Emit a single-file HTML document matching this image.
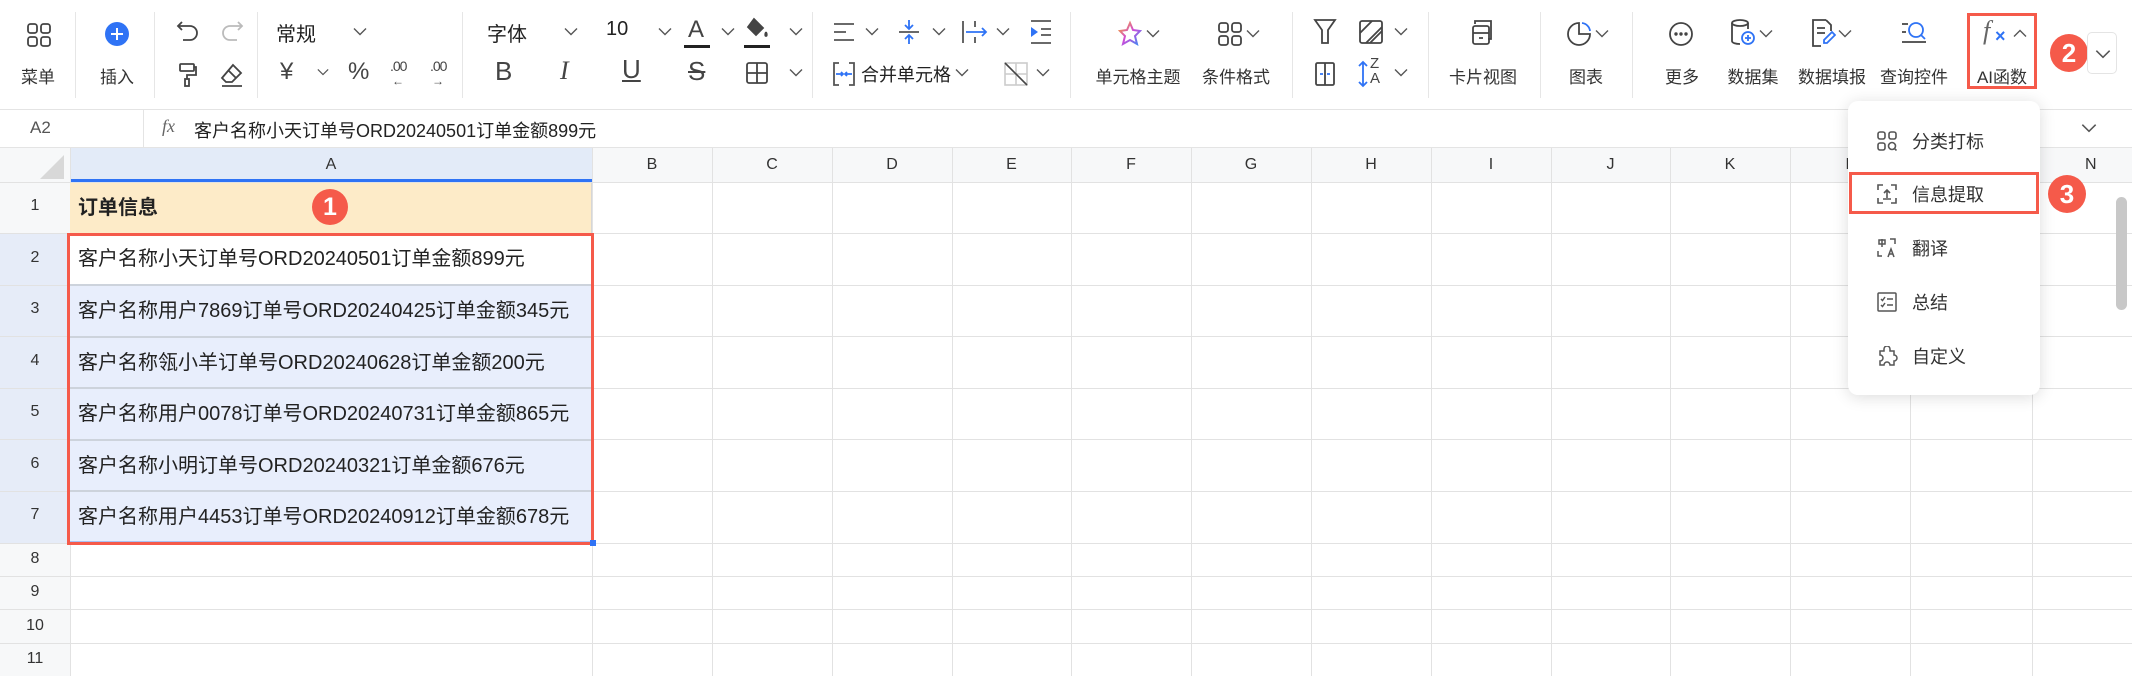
<!DOCTYPE html>
<html><head><meta charset="utf-8"><style>
*{margin:0;padding:0;box-sizing:border-box}
body{width:2132px;height:676px;overflow:hidden;background:#fff;position:relative;font-family:"Liberation Sans","Noto Sans CJK SC",sans-serif;color:#333}
.a{position:absolute}
.lbl{position:absolute;font-size:17px;color:#333;transform:translateX(-50%);white-space:nowrap;top:63px}
.ic{position:absolute}
.sep{position:absolute;top:12px;width:1px;height:86px;background:#e6e6e6}
.t{position:absolute;font-size:20px;color:#222;white-space:nowrap}
.vl{position:absolute;width:1px;background:#e2e2e2}
.hl{position:absolute;height:1px;background:#e2e2e2}
.col{position:absolute;top:147px;height:35px;line-height:35px;text-align:center;font-size:16px;color:#333}
.rn{position:absolute;left:0;width:70px;text-align:center;font-size:16px;color:#333}
.cell{position:absolute;left:70px;width:522px;font-size:20px;color:#222;padding-left:8px;border-bottom:2px solid #cdd3dc}
.badge{position:absolute;border-radius:50%;background:#f55a4a;color:#fff;font-weight:bold;text-align:center;font-family:"Liberation Sans",sans-serif}
.mi{position:absolute;left:1912px;font-size:18px;color:#333}
</style></head><body>
<svg width="0" height="0" style="position:absolute"><defs>
<symbol id="cv" viewBox="0 0 14 9"><path d="M1 1.5L7 7.5L13 1.5" fill="none" stroke="#555" stroke-width="1.4"/></symbol>
</defs></svg>

<!-- toolbar -->
<svg class="ic" style="left:26px;top:22px" width="26" height="26" viewBox="0 0 26 26" fill="none" stroke="#444" stroke-width="1.8"><rect x="2" y="2" width="9" height="9" rx="2.5"/><rect x="15" y="2" width="9" height="9" rx="2.5"/><rect x="2" y="15" width="9" height="9" rx="2.5"/><rect x="15" y="15" width="9" height="9" rx="2.5"/></svg>
<div class="lbl" style="left:38px">菜单</div>
<div class="sep" style="left:75px"></div>
<svg class="ic" style="left:104px;top:21px" width="26" height="26"><circle cx="13" cy="13" r="12" fill="#2f73f5"/><path d="M13 7v12M7 13h12" stroke="#fff" stroke-width="2"/></svg>
<div class="lbl" style="left:117px">插入</div>
<div class="sep" style="left:154px"></div>
<svg class="ic" style="left:176px;top:20px" width="24" height="22" fill="none" stroke="#444" stroke-width="1.8"><path d="M6 2L2 6L6 10"/><path d="M2 6h12a7 7 0 0 1 0 14H7"/></svg>
<svg class="ic" style="left:220px;top:20px" width="24" height="22" fill="none" stroke="#bbb" stroke-width="1.8"><path d="M18 2L22 6L18 10"/><path d="M22 6H10a7 7 0 0 0 0 14h7"/></svg>
<svg class="ic" style="left:178px;top:62px" width="20" height="26" fill="none" stroke="#444" stroke-width="1.8"><rect x="2" y="2" width="14" height="7" rx="1"/><path d="M16 5h2v8H9v4"/><rect x="7" y="17" width="4" height="7"/></svg>
<svg class="ic" style="left:219px;top:62px" width="26" height="26" fill="none" stroke="#444" stroke-width="1.8"><path d="M14 3l8 8-9 9H7l-4-4z"/><path d="M9 8l8 8"/><path d="M3 24h20"/></svg>
<div class="sep" style="left:257px"></div>
<div class="t" style="left:276px;top:18px;font-size:20px">常规</div>
<svg class="ic" style="left:353px;top:27px" width="14" height="9"><use href="#cv"/></svg>
<div class="t" style="left:280px;top:58px;font-size:24px;color:#444">¥</div>
<svg class="ic" style="left:317px;top:68px" width="12" height="8"><use href="#cv"/></svg>
<div class="t" style="left:348px;top:58px;font-size:24px;color:#444">%</div>
<div class="t" style="left:390px;top:58px;font-size:14px;color:#444;letter-spacing:-1px">.00<br></div><div class="t" style="left:392px;top:74px;font-size:12px;color:#444">←</div>
<div class="t" style="left:430px;top:58px;font-size:14px;color:#444;letter-spacing:-1px">.00</div><div class="t" style="left:432px;top:74px;font-size:12px;color:#444">→</div>
<div class="sep" style="left:462px"></div>
<div class="t" style="left:487px;top:18px">字体</div>
<svg class="ic" style="left:564px;top:27px" width="14" height="9"><use href="#cv"/></svg>
<div class="t" style="left:606px;top:18px">10</div>
<svg class="ic" style="left:658px;top:27px" width="14" height="9"><use href="#cv"/></svg>
<div class="t" style="left:688px;top:16px;font-size:24px;color:#444">A</div><div class="a" style="left:684px;top:45px;width:26px;height:3px;background:#222"></div>
<svg class="ic" style="left:721px;top:27px" width="14" height="9"><use href="#cv"/></svg>
<svg class="ic" style="left:744px;top:16px" width="26" height="26" fill="none" stroke="#444" stroke-width="1.8"><path d="M10 3l9 9-7 7-8-8z" fill="#444"/><path d="M22 16c1 2 1 4 0 4s-1-2 0-4"/></svg><div class="a" style="left:744px;top:45px;width:26px;height:3px;background:#222"></div>
<svg class="ic" style="left:789px;top:27px" width="14" height="9"><use href="#cv"/></svg>
<div class="t" style="left:495px;top:56px;font-size:26px;color:#444">B</div>
<div class="t" style="left:560px;top:56px;font-size:26px;color:#444;font-style:italic;font-family:'Liberation Serif',serif">I</div>
<div class="t" style="left:622px;top:54px;font-size:26px;color:#444;text-decoration:underline">U</div>
<div class="t" style="left:688px;top:56px;font-size:26px;color:#444;text-decoration:line-through">S</div>
<svg class="ic" style="left:745px;top:61px" width="24" height="24" fill="none" stroke="#444" stroke-width="1.8"><rect x="2" y="2" width="20" height="20" rx="2"/><path d="M12 2v20M2 12h20"/></svg>
<svg class="ic" style="left:789px;top:68px" width="14" height="9"><use href="#cv"/></svg>
<div class="sep" style="left:812px"></div>
<svg class="ic" style="left:832px;top:21px" width="24" height="24" stroke="#555" stroke-width="1.8"><path d="M2 3h20M2 11h12M2 19h20"/></svg>
<svg class="ic" style="left:865px;top:27px" width="14" height="9"><use href="#cv"/></svg>
<svg class="ic" style="left:897px;top:18px" width="24" height="28" stroke-width="1.8"><path d="M2 14h20" stroke="#555"/><path d="M12 2v9M12 17v9M8 7l4 4 4-4M8 21l4-4 4 4" stroke="#2f73f5" fill="none"/></svg>
<svg class="ic" style="left:932px;top:27px" width="14" height="9"><use href="#cv"/></svg>
<svg class="ic" style="left:961px;top:18px" width="28" height="28" stroke-width="1.8" fill="none"><path d="M2 3v22M14 3v6M14 19v6" stroke="#555"/><path d="M5 14h20M21 10l4 4-4 4" stroke="#2f73f5"/></svg>
<svg class="ic" style="left:996px;top:27px" width="14" height="9"><use href="#cv"/></svg>
<svg class="ic" style="left:1029px;top:19px" width="24" height="26" stroke="#555" stroke-width="1.8"><path d="M2 2h20M12 10h10M12 16h10M2 24h20"/><path d="M2 8l7 5-7 5z" fill="#2f73f5" stroke="none"/></svg>
<svg class="ic" style="left:832px;top:61px" width="24" height="26" fill="none" stroke-width="1.8"><path d="M7 2H2v22h5M17 2h5v22h-5" stroke="#555"/><path d="M4 13h6M9 11l2 2-2 2M20 13h-6M15 11l-2 2 2 2" stroke="#2f73f5"/></svg>
<div class="t" style="left:861px;top:61px;font-size:18px">合并单元格</div>
<svg class="ic" style="left:955px;top:68px" width="14" height="9"><use href="#cv"/></svg>
<svg class="ic" style="left:1004px;top:62px" width="24" height="24" fill="none" stroke-width="1.6"><rect x="1" y="1" width="22" height="22" stroke="#ccc"/><path d="M12 1v22M1 12h22" stroke="#ccc"/><path d="M1 1l22 22" stroke="#444"/></svg>
<svg class="ic" style="left:1036px;top:68px" width="14" height="9"><use href="#cv"/></svg>
<div class="sep" style="left:1070px"></div>
<svg class="ic" style="left:1116px;top:20px" width="28" height="28" fill="none" stroke-width="2"><path d="M14 3l3 7 7 1-5 5 2 8-7-4-7 4 2-8-5-5 7-1z" stroke="url(#g)"/><defs><linearGradient id="g" x1="0" y1="0" x2="1" y2="1"><stop offset="0" stop-color="#f7a52b"/><stop offset=".5" stop-color="#d04ad8"/><stop offset="1" stop-color="#3a8af5"/></linearGradient></defs></svg>
<svg class="ic" style="left:1146px;top:29px" width="14" height="9"><use href="#cv"/></svg>
<div class="lbl" style="left:1138px">单元格主题</div>
<svg class="ic" style="left:1217px;top:21px" width="26" height="26" fill="none" stroke="#444" stroke-width="1.8"><rect x="2" y="2" width="9" height="9" rx="2.5"/><rect x="15" y="2" width="9" height="9" rx="2.5"/><rect x="2" y="15" width="9" height="9" rx="2.5"/><rect x="15" y="15" width="9" height="9" rx="2.5"/></svg>
<svg class="ic" style="left:1246px;top:29px" width="14" height="9"><use href="#cv"/></svg>
<div class="lbl" style="left:1236px">条件格式</div>
<div class="sep" style="left:1292px"></div>
<svg class="ic" style="left:1313px;top:18px" width="24" height="28" fill="none" stroke="#444" stroke-width="1.8"><path d="M2 2h20l-7 10v13h-6V12z"/></svg>
<svg class="ic" style="left:1358px;top:19px" width="26" height="26" fill="none" stroke="#444" stroke-width="1.8"><rect x="2" y="2" width="22" height="22" rx="2"/><path d="M2 14L14 2M8 24L24 8M12 24L24 12"/></svg>
<svg class="ic" style="left:1394px;top:27px" width="14" height="9"><use href="#cv"/></svg>
<svg class="ic" style="left:1314px;top:61px" width="22" height="26" fill="none" stroke-width="1.8"><rect x="2" y="2" width="18" height="22" rx="1.5" stroke="#444"/><path d="M11 2v22" stroke="#444"/><path d="M6 13h3M16 13h-3" stroke="#2f73f5"/></svg>
<svg class="ic" style="left:1356px;top:60px" width="14" height="28" stroke="#2f73f5" stroke-width="1.8" fill="none"><path d="M7 2v24M3 6l4-4 4 4M3 22l4 4 4-4"/></svg>
<div class="t" style="left:1370px;top:56px;font-size:15px;line-height:15px;color:#444">Z<br>A</div>
<svg class="ic" style="left:1394px;top:68px" width="14" height="9"><use href="#cv"/></svg>
<div class="sep" style="left:1428px"></div>
<svg class="ic" style="left:1470px;top:18px" width="26" height="28" fill="none" stroke="#444" stroke-width="1.8"><path d="M5 6V3h16v18h-3"/><rect x="3" y="8" width="16" height="18" rx="2"/><path d="M3 15h16M9 20h4"/></svg>
<div class="lbl" style="left:1483px">卡片视图</div>
<div class="sep" style="left:1540px"></div>
<svg class="ic" style="left:1565px;top:20px" width="28" height="28" fill="none" stroke-width="1.8"><path d="M14 3a11 11 0 1 0 11 11H14z" stroke="#444"/><path d="M17 3a9 9 0 0 1 8 8" stroke="#2f73f5"/></svg>
<svg class="ic" style="left:1595px;top:29px" width="14" height="9"><use href="#cv"/></svg>
<div class="lbl" style="left:1586px">图表</div>
<div class="sep" style="left:1632px"></div>
<svg class="ic" style="left:1668px;top:21px" width="26" height="26" fill="none" stroke="#444" stroke-width="1.8"><circle cx="13" cy="13" r="11"/><circle cx="8" cy="13" r=".8" fill="#444"/><circle cx="13" cy="13" r=".8" fill="#444"/><circle cx="18" cy="13" r=".8" fill="#444"/></svg>
<div class="lbl" style="left:1682px">更多</div>
<svg class="ic" style="left:1730px;top:18px" width="26" height="30" fill="none" stroke-width="1.8"><ellipse cx="10" cy="5" rx="8" ry="3" stroke="#444"/><path d="M2 5v18c0 2 4 3 8 3M18 5v6" stroke="#444"/><circle cx="18" cy="20" r="6" stroke="#2f73f5"/><path d="M18 17v6M15 20h6" stroke="#2f73f5"/></svg>
<svg class="ic" style="left:1759px;top:29px" width="14" height="9"><use href="#cv"/></svg>
<div class="lbl" style="left:1753px">数据集</div>
<svg class="ic" style="left:1810px;top:18px" width="26" height="30" fill="none" stroke-width="1.8"><path d="M16 2H3v26h8M16 2l5 5v6" stroke="#444"/><path d="M7 10h8M7 15h8" stroke="#444"/><path d="M22 14l3 3-8 8h-3v-3z" stroke="#2f73f5"/></svg>
<svg class="ic" style="left:1838px;top:29px" width="14" height="9"><use href="#cv"/></svg>
<div class="lbl" style="left:1832px">数据填报</div>
<svg class="ic" style="left:1900px;top:20px" width="28" height="26" fill="none" stroke-width="1.8"><path d="M2 4h6M2 12h4M2 22h24" stroke="#444"/><circle cx="16" cy="10" r="7" stroke="#2f73f5"/><path d="M21 15l4 4" stroke="#2f73f5"/></svg>
<div class="lbl" style="left:1914px">查询控件</div>
<div class="a" style="left:1967px;top:13px;width:70px;height:76px;border:3px solid #f55a4a"></div>
<div class="t" style="left:1983px;top:16px;font-size:26px;color:#666;font-style:italic;font-family:'Liberation Serif',serif">f</div>
<div class="t" style="left:1995px;top:26px;font-size:18px;color:#2f73f5;font-weight:bold">×</div>
<svg class="ic" style="left:2013px;top:29px" width="14" height="9"><path d="M1 7.5L7 1.5L13 7.5" fill="none" stroke="#555" stroke-width="1.4"/></svg>
<div class="lbl" style="left:2002px">AI函数</div>
<div class="badge" style="left:2050px;top:34px;width:38px;height:38px;line-height:38px;font-size:26px">2</div>
<div class="a" style="left:2087px;top:32px;width:30px;height:42px;border:1px solid #e4e4e4;border-radius:5px;background:#fff"></div>
<svg class="ic" style="left:2095px;top:49px" width="16" height="10"><use href="#cv"/></svg>

<!-- formula bar -->
<div class="hl" style="left:0;top:109px;width:2132px;background:#e4e4e4"></div>
<div class="hl" style="left:0;top:147px;width:2132px;background:#e4e4e4"></div>
<div class="vl" style="left:143px;top:109px;height:38px;background:#e4e4e4"></div>
<div class="t" style="left:30px;top:118px;font-size:17px;color:#555">A2</div>
<div class="t" style="left:162px;top:116px;font-size:18px;color:#666;font-style:italic;font-family:'Liberation Serif',serif">fx</div>
<div class="t" style="left:194px;top:117px;font-size:18px">客户名称小天订单号ORD20240501订单金额899元</div>
<svg class="ic" style="left:2081px;top:123px" width="16" height="10"><use href="#cv"/></svg>

<!-- grid background -->
<div class="a" style="left:0;top:148px;width:2132px;height:34px;background:#f7f8f9"></div>
<div class="a" style="left:0;top:182px;width:70px;height:494px;background:#f7f8f9"></div>
<div class="a" style="left:0;top:234px;width:70px;height:309px;background:#e6ecf8"></div>
<div class="a" style="left:70px;top:148px;width:522px;height:34px;background:#e3ebf8;border-bottom:3px solid #2f73f5"></div>
<svg class="ic" style="left:40px;top:155px" width="24" height="24"><path d="M24 0V24H0z" fill="#d8d8d8"/></svg>
<!-- vertical lines -->
<div class="vl" style="left:70px;top:148px;height:528px"></div>
<div class="vl" style="left:592px;top:148px;height:528px"></div>
<div class="vl" style="left:712px;top:148px;height:528px"></div>
<div class="vl" style="left:832px;top:148px;height:528px"></div>
<div class="vl" style="left:952px;top:148px;height:528px"></div>
<div class="vl" style="left:1071px;top:148px;height:528px"></div>
<div class="vl" style="left:1191px;top:148px;height:528px"></div>
<div class="vl" style="left:1311px;top:148px;height:528px"></div>
<div class="vl" style="left:1431px;top:148px;height:528px"></div>
<div class="vl" style="left:1551px;top:148px;height:528px"></div>
<div class="vl" style="left:1670px;top:148px;height:528px"></div>
<div class="vl" style="left:1790px;top:148px;height:528px"></div>
<div class="vl" style="left:1910px;top:148px;height:528px"></div>
<div class="vl" style="left:2032px;top:148px;height:528px"></div>
<!-- horizontal lines -->
<div class="hl" style="left:0;top:182px;width:2132px"></div>
<div class="hl" style="left:0;top:233px;width:2132px"></div>
<div class="hl" style="left:0;top:285px;width:2132px"></div>
<div class="hl" style="left:0;top:336px;width:2132px"></div>
<div class="hl" style="left:0;top:388px;width:2132px"></div>
<div class="hl" style="left:0;top:439px;width:2132px"></div>
<div class="hl" style="left:0;top:491px;width:2132px"></div>
<div class="hl" style="left:0;top:543px;width:2132px"></div>
<div class="hl" style="left:0;top:576px;width:2132px"></div>
<div class="hl" style="left:0;top:609px;width:2132px"></div>
<div class="hl" style="left:0;top:643px;width:2132px"></div>
<!-- column letters -->
<div class="col" style="left:70px;width:522px">A</div>
<div class="col" style="left:592px;width:120px">B</div>
<div class="col" style="left:712px;width:120px">C</div>
<div class="col" style="left:832px;width:120px">D</div>
<div class="col" style="left:952px;width:119px">E</div>
<div class="col" style="left:1071px;width:120px">F</div>
<div class="col" style="left:1191px;width:120px">G</div>
<div class="col" style="left:1311px;width:120px">H</div>
<div class="col" style="left:1431px;width:120px">I</div>
<div class="col" style="left:1551px;width:119px">J</div>
<div class="col" style="left:1670px;width:120px">K</div>
<div class="col" style="left:1790px;width:120px">L</div>
<div class="col" style="left:2032px;width:120px;text-align:left;padding-left:53px">N</div>
<!-- row numbers -->
<div class="rn" style="top:197px">1</div>
<div class="rn" style="top:249px">2</div>
<div class="rn" style="top:300px">3</div>
<div class="rn" style="top:352px">4</div>
<div class="rn" style="top:403px">5</div>
<div class="rn" style="top:455px">6</div>
<div class="rn" style="top:506px">7</div>
<div class="rn" style="top:550px">8</div>
<div class="rn" style="top:583px">9</div>
<div class="rn" style="top:617px">10</div>
<div class="rn" style="top:650px">11</div>
<!-- cells -->
<div class="cell" style="top:183px;height:51px;line-height:51px;background:#fdebc8;font-weight:bold;border-right:1px solid #d6d6d6;border-bottom:none">订单信息</div>
<div class="cell" style="top:234px;height:52px;line-height:50px;background:#fff">客户名称小天订单号ORD20240501订单金额899元</div>
<div class="cell" style="top:286px;height:52px;line-height:50px;background:#e8eefc">客户名称用户7869订单号ORD20240425订单金额345元</div>
<div class="cell" style="top:338px;height:51px;line-height:50px;background:#e8eefc">客户名称瓴小羊订单号ORD20240628订单金额200元</div>
<div class="cell" style="top:389px;height:52px;line-height:50px;background:#e8eefc">客户名称用户0078订单号ORD20240731订单金额865元</div>
<div class="cell" style="top:441px;height:51px;line-height:50px;background:#e8eefc">客户名称小明订单号ORD20240321订单金额676元</div>
<div class="cell" style="top:492px;height:51px;line-height:50px;background:#e8eefc;border-bottom:2px solid #a9c1f3">客户名称用户4453订单号ORD20240912订单金额678元</div>
<div class="a" style="left:67px;top:233px;width:527px;height:312px;border:3px solid #f55a4a"></div>
<div class="a" style="left:590px;top:540px;width:6px;height:6px;background:#2f73f5"></div>
<div class="badge" style="left:312px;top:189px;width:36px;height:36px;line-height:36px;font-size:25px">1</div>

<!-- scrollbar -->
<div class="a" style="left:2116px;top:197px;width:11px;height:113px;border-radius:6px;background:#c8c8c8"></div>

<!-- dropdown -->
<div class="a" style="left:1848px;top:101px;width:192px;height:294px;background:#fff;border-radius:10px;box-shadow:0 2px 16px rgba(0,0,0,.14)"></div>
<svg class="ic" style="left:1877px;top:131px" width="20" height="20" fill="none" stroke="#555" stroke-width="1.6"><rect x="1" y="1" width="7" height="7" rx="2"/><rect x="12" y="1" width="7" height="7" rx="2"/><rect x="1" y="12" width="7" height="7" rx="2"/><circle cx="15" cy="15" r="3.5"/><path d="M17.5 17.5l2 2"/></svg>
<div class="mi" style="top:128px">分类打标</div>
<div class="a" style="left:1849px;top:172px;width:190px;height:42px;border:3px solid #f55a4a;background:#fff"></div>
<svg class="ic" style="left:1877px;top:184px" width="20" height="20" fill="none" stroke="#555" stroke-width="1.6"><path d="M1 6V1h5M14 1h5v5M19 14v5h-5M6 19H1v-5"/><path d="M10 14V6M7 9l3-3 3 3M6 15h8"/></svg>
<div class="mi" style="top:181px">信息提取</div>
<svg class="ic" style="left:1877px;top:238px" width="20" height="20" fill="none" stroke="#555" stroke-width="1.5"><path d="M2 2h6v4H2zM5 1v8M1 13v5h4M13 1h5v5"/><path d="M11 19l3-8 3 8M12 16h4"/></svg>
<div class="mi" style="top:235px">翻译</div>
<svg class="ic" style="left:1877px;top:292px" width="20" height="20" fill="none" stroke="#555" stroke-width="1.5"><rect x="1" y="1" width="18" height="18" rx="1"/><path d="M4 7l1.5 1.5L8 5M10 7h6M4 13l1.5 1.5L8 11M10 13h6"/></svg>
<div class="mi" style="top:289px">总结</div>
<svg class="ic" style="left:1877px;top:346px" width="21" height="21" fill="none" stroke="#555" stroke-width="1.5"><path d="M7 3a3 3 0 0 1 6 0v2h4v4a3 3 0 0 1 0 6v4h-4a3 3 0 0 0-6 0H3v-4a3 3 0 0 0 0-6V5h4z"/></svg>
<div class="mi" style="top:343px">自定义</div>
<div class="badge" style="left:2048px;top:175px;width:38px;height:38px;line-height:38px;font-size:26px">3</div>
</body></html>
